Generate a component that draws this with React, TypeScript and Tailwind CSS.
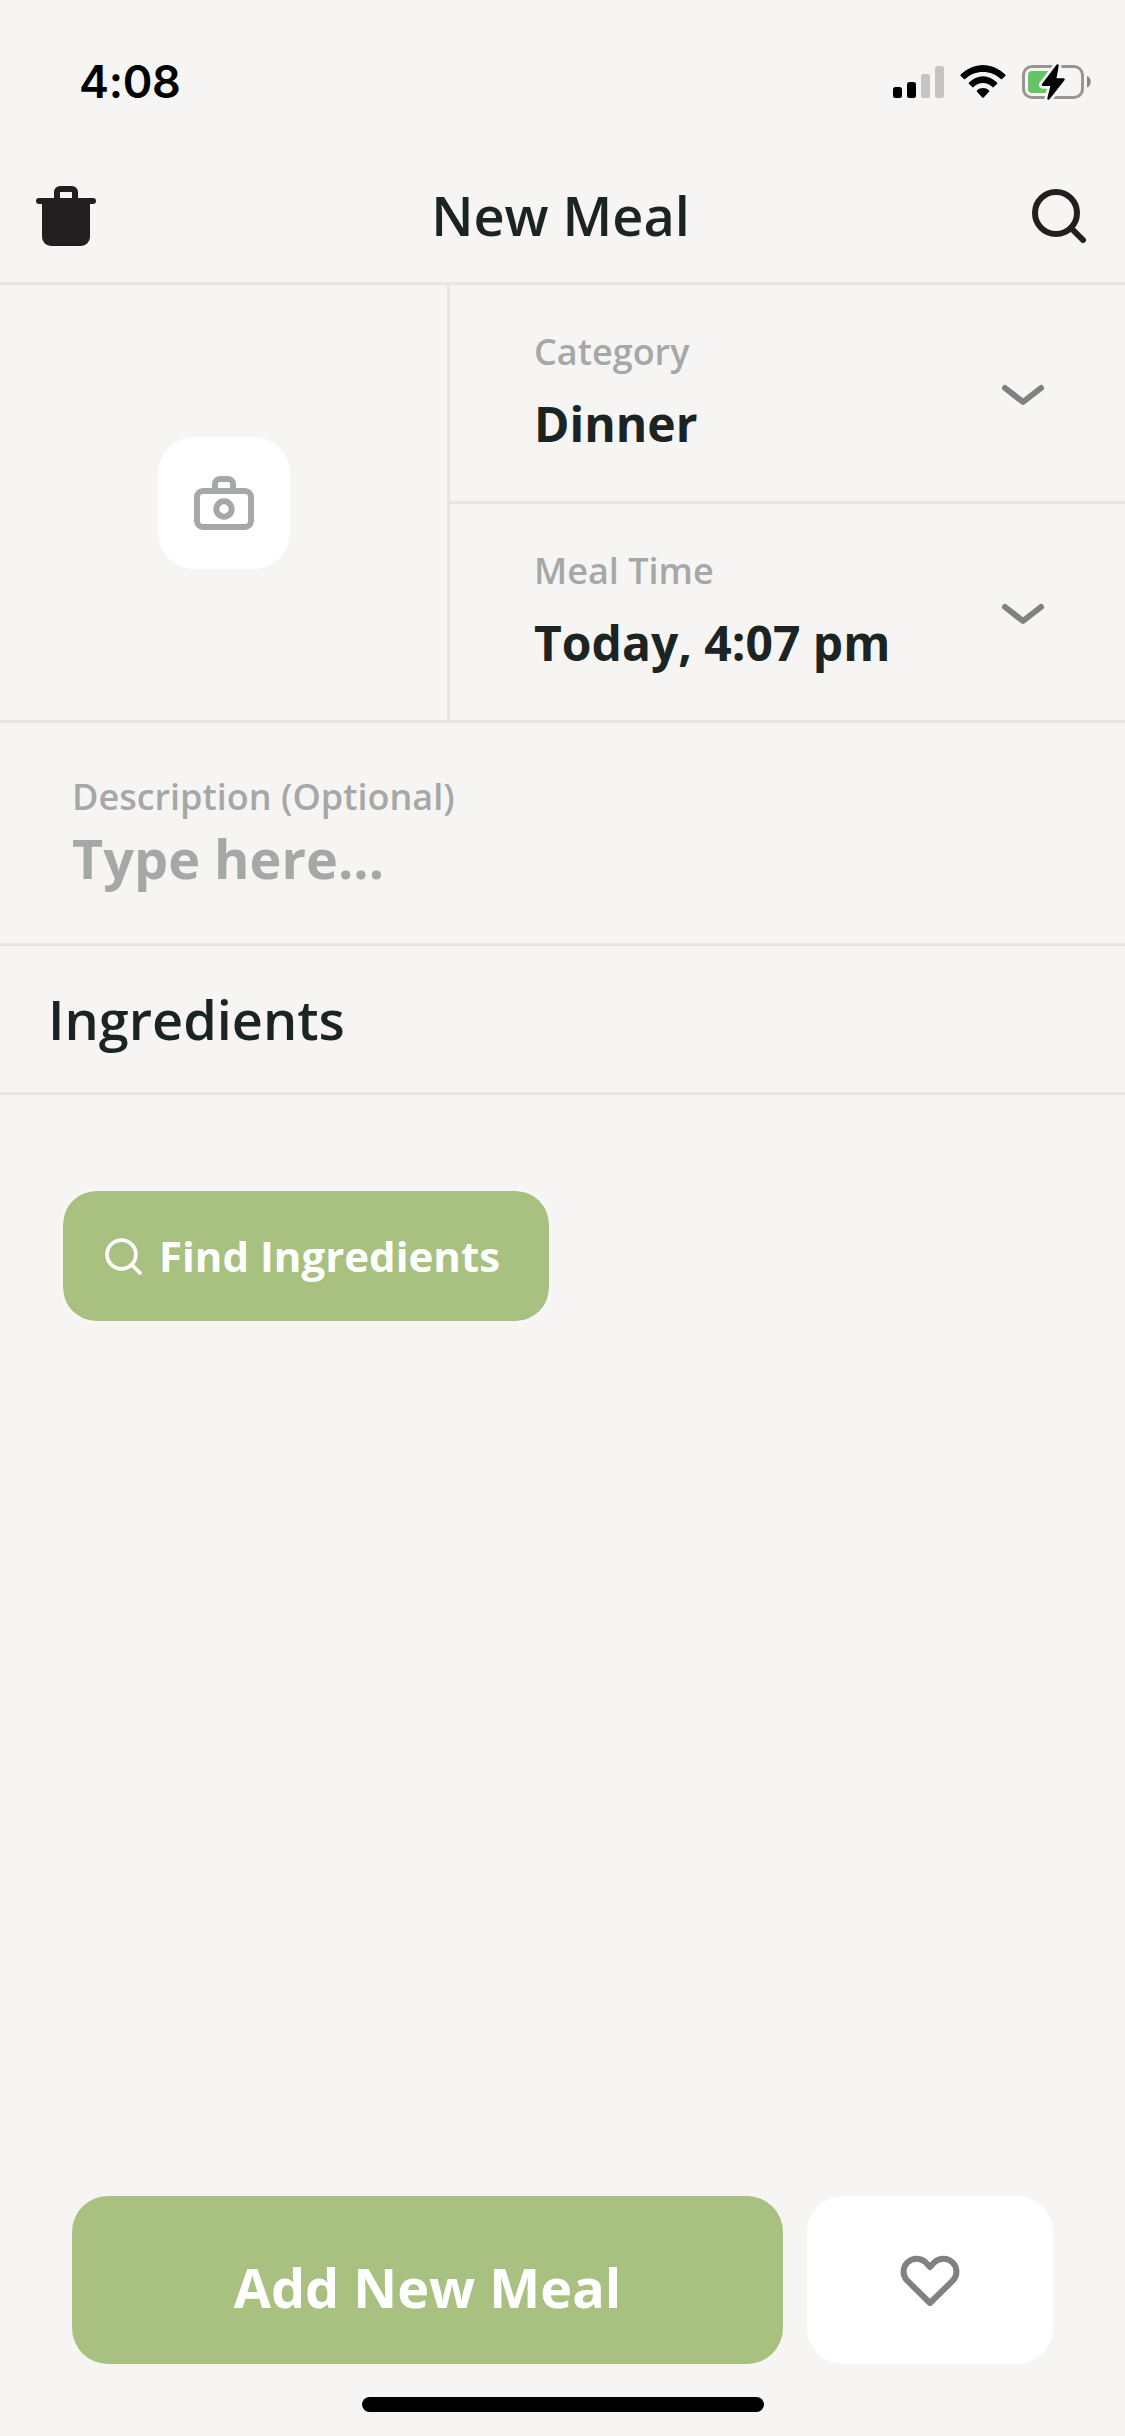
import type { ReactNode } from 'react'

const details = [
  { label: 'Category', value: 'Dinner' },
  { label: 'Meal Time', value: 'Today, 4:07 pm' },
]

function TrashIcon() {
  return (
    <svg width="60" height="60" viewBox="0 0 60 60" fill="#231f20">
      <path d="M21 15V6a3 3 0 0 1 3-3h12a3 3 0 0 1 3 3v9" fill="none" stroke="#231f20" strokeWidth="6" />
      <rect y="12" width="60" height="6" rx="3" />
      <path d="M6 15h48v36a9 9 0 0 1-9 9H15a9 9 0 0 1-9-9z" />
    </svg>
  )
}

function SearchIcon({ size, strokeWidth }: { size: number; strokeWidth: number }) {
  return (
    <svg width={size} height={size} viewBox="0 0 54 54" fill="none" stroke="currentColor" strokeWidth={strokeWidth} strokeLinecap="round">
      <circle cx="24" cy="24" r="21" />
      <path d="M39 39l12 12" />
    </svg>
  )
}

function CameraIcon() {
  return (
    <svg width="60" height="54" viewBox="0 0 60 54" fill="none" stroke="#a6a8a7" strokeWidth="6">
      <rect x="3" y="15" width="54" height="36" rx="6" />
      <path d="M21 14V8a5 5 0 0 1 5-5h8a5 5 0 0 1 5 5v6" />
      <circle cx="30" cy="33" r="7.7" />
    </svg>
  )
}

function ChevronIcon() {
  return (
    <svg width="44" height="22" viewBox="0 0 44 22" fill="none" stroke="#808281" strokeWidth="6" strokeLinecap="round" strokeLinejoin="round">
      <path d="M4 4l18 14L40 4" />
    </svg>
  )
}

function HeartIcon() {
  return (
    <svg width="60" height="51" viewBox="0 0 60 51" fill="none" stroke="#808281" strokeWidth="6" strokeLinejoin="round">
      <path d="M30 12l-4.700-5A13 13 0 0 0 6.800 25.200L30 48l23.200-22.800A13 13 0 0 0 34.700 7z" />
    </svg>
  )
}

function StatusIcons() {
  return (
    <svg width="200" height="36" viewBox="0 0 200 36">
      {/* signal */}
      <rect x="1" y="23" width="9" height="11" rx="2.5" />
      <rect x="15" y="18" width="9" height="16" rx="2.5" />
      <rect x="29" y="10" width="9" height="24" rx="2.5" fill="#c5c4c3" />
      <rect x="43" y="2" width="9" height="32" rx="2.5" fill="#c5c4c3" />
      {/* wifi */}
      <path d="M68.700 10.600C75 4.500 83 1 91 1s16 3.500 22.300 9.600a1 1 0 0 1 0 1.400l-3.200 3a1 1 0 0 1-1.300 0C104 10.500 97.800 8 91 8s-13 2.500-17.800 7a1 1 0 0 1-1.300 0l-3.200-3a1 1 0 0 1 0-1.400z" />
      <path d="M77 18.500C81 14.500 85.700 12.200 91 12.200s10 2.300 14 6.300a1 1 0 0 1 0 1.400l-3.300 3.200a1 1 0 0 1-1.300 0C97.700 20.500 94.600 19 91 19s-6.700 1.500-9.400 4.100a1 1 0 0 1-1.300 0L77 19.900a1 1 0 0 1 0-1.400z" />
      <path d="M85 26.400c3.500-3.200 8.500-3.200 12 0a1 1 0 0 1 0 1.400l-5.300 5.600a1 1 0 0 1-1.400 0L85 27.800a1 1 0 0 1 0-1.400z" />
      {/* battery */}
      <rect x="131.500" y="2.500" width="59" height="31" rx="8.500" fill="none" stroke="#979695" strokeWidth="3" />
      <path d="M195 12c5 1.500 5 10 0 11.500z" fill="#8a8988" />
      <path d="M140 7h24v22h-24a4 4 0 0 1-4-4V11a4 4 0 0 1 4-4z" fill="#67c466" />
      <path d="M165.500 1.500L151 20.800h9L156.500 34.500L171.500 15.500h-8.500z" fill="#f6f5f3" stroke="#f6f5f3" strokeWidth="8" strokeLinejoin="round" />
      <path d="M165.500 1.500L151 20.800h9L156.500 34.500L171.500 15.500h-8.500z" stroke="#000" strokeWidth="2.500" strokeLinejoin="round" />
    </svg>
  )
}

function Label({ children }: { children: ReactNode }) {
  return <p className="text-[36px] leading-[48px] font-semibold text-[#a6a8a7]">{children}</p>
}

export default function App() {
  return (
    <div className="flex h-[2436px] w-[1125px] flex-col bg-[#f6f5f3] font-['Open_Sans','Noto_Sans',sans-serif] text-[#1c2423]">
      {/* Status bar */}
      <div className="flex h-[132px] items-start justify-between pt-[64px] pr-[33px] pl-[79px]">
        <span className="font-['Inter',sans-serif] text-[45px] leading-[36px] font-semibold tracking-[-0.3px] text-black">4:08</span>
        <StatusIcons />
      </div>

      {/* Header */}
      <header className="flex h-[153px] items-center border-b-[3px] border-[#eae5df] pt-[18px] pr-[39px] pl-[36px]">
        <button>
          <TrashIcon />
        </button>
        <h1 className="flex-1 pr-[7px] pb-[2px] text-center text-[54px] leading-[72px] font-semibold">New Meal</h1>
        <button className="text-[#231f20]">
          <SearchIcon size={54} strokeWidth={6} />
        </button>
      </header>

      {/* Photo, category and time */}
      <section className="flex h-[438px] border-b-[3px] border-[#eae5df]">
        <div className="flex w-[450px] items-center justify-center border-r-[3px] border-[#eae5df]">
          <button className="flex size-[132px] items-center justify-center rounded-[36px] bg-white">
            <CameraIcon />
          </button>
        </div>
        <div className="flex flex-1 flex-col divide-y-[3px] divide-[#eae5df]">
          {details.map((item) => (
            <button key={item.label} className="box-content flex h-[215px] items-center justify-between pr-[80px] pb-px pl-[84px] text-left">
              <div className="pb-[2px]">
                <Label>{item.label}</Label>
                <p className="mt-[16px] text-[48px] leading-[64px] font-bold">{item.value}</p>
              </div>
              <div className="pt-[4px]">
                <ChevronIcon />
              </div>
            </button>
          ))}
        </div>
      </section>

      {/* Description */}
      <section className="h-[223px] border-b-[3px] border-[#eae5df] px-[72px] pt-[50px]">
        <Label>Description (Optional)</Label>
        <p className="mt-[1px] text-[54px] leading-[72px] font-bold text-[#a6a8a7]">Type here...</p>
      </section>

      {/* Ingredients */}
      <section className="flex h-[149px] items-center border-b-[3px] border-[#eae5df] px-[48px]">
        <h2 className="text-[54px] leading-[72px] font-semibold">Ingredients</h2>
      </section>
      <div className="flex-1 px-[60px] pt-[93px]">
        <button className="flex h-[136px] w-[492px] items-center rounded-[36px] border-[3px] border-[#f8f7f5] bg-[#a8c181] bg-clip-padding pl-[42px] text-white">
          <SearchIcon size={37} strokeWidth={5.5} />
          <span className="ml-[17px] text-[42px] leading-[56px] font-bold">Find Ingredients</span>
        </button>
      </div>

      {/* Actions */}
      <footer className="flex flex-col items-center pb-[24px]">
        <div className="flex h-[168px] w-[981px] gap-[24px]">
          <button className="flex w-[711px] items-center justify-center rounded-[36px] bg-[#a8c181] pt-[14px] text-[54px] leading-[72px] font-bold text-white">
            Add New Meal
          </button>
          <button className="flex flex-1 items-center justify-center rounded-[36px] bg-white">
            <HeartIcon />
          </button>
        </div>
        <div className="mt-[33px] h-[15px] w-[402px] rounded-full bg-black" />
      </footer>
    </div>
  )
}
